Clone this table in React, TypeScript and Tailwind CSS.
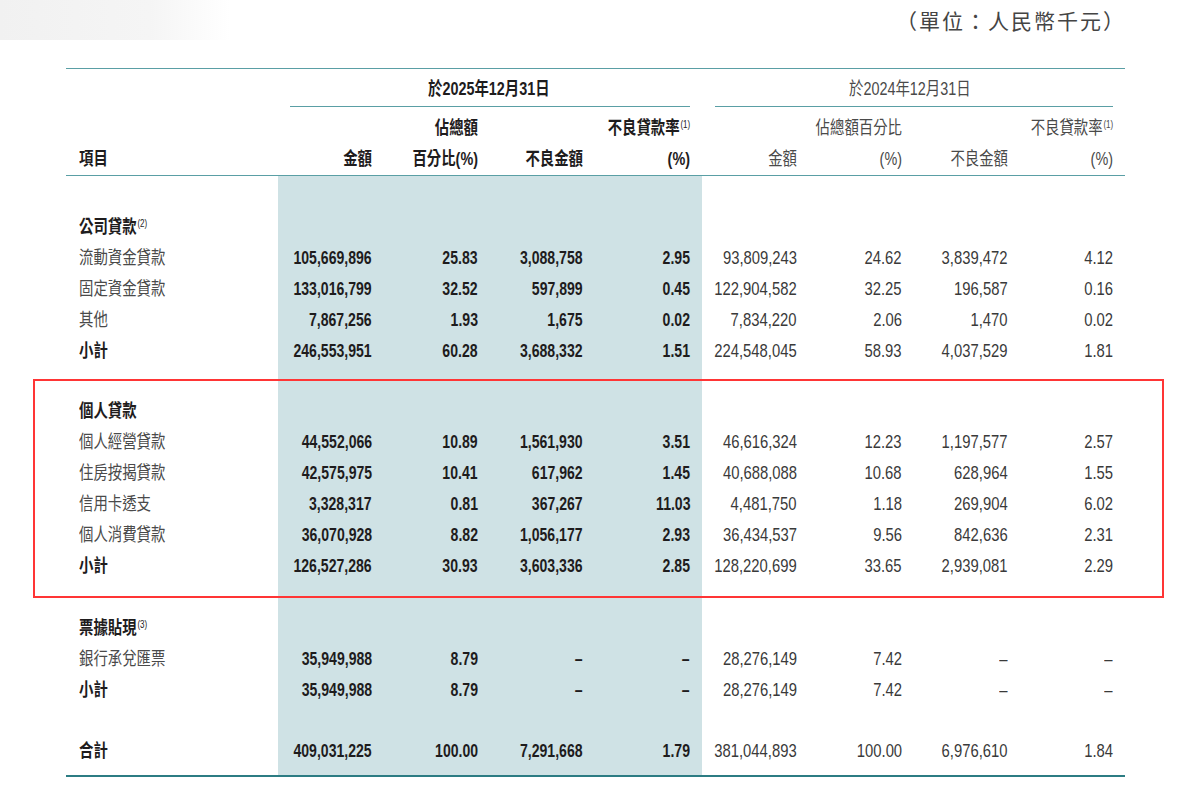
import React from "react";

type Row =
  | { kind: "gap"; h: string }
  | { kind: "head"; label: string; sup?: string }
  | { kind: "data"; label: string; bold?: boolean; v: string[] };

const rows: Row[] = [
  { kind: "gap", h: "h-[35px]" },
  { kind: "head", label: "公司貸款", sup: "(2)" },
  { kind: "data", label: "流動資金貸款", v: ["105,669,896", "25.83", "3,088,758", "2.95", "93,809,243", "24.62", "3,839,472", "4.12"] },
  { kind: "data", label: "固定資金貸款", v: ["133,016,799", "32.52", "597,899", "0.45", "122,904,582", "32.25", "196,587", "0.16"] },
  { kind: "data", label: "其他", v: ["7,867,256", "1.93", "1,675", "0.02", "7,834,220", "2.06", "1,470", "0.02"] },
  { kind: "data", label: "小計", bold: true, v: ["246,553,951", "60.28", "3,688,332", "1.51", "224,548,045", "58.93", "4,037,529", "1.81"] },
  { kind: "gap", h: "h-[29px]" },
  { kind: "head", label: "個人貸款" },
  { kind: "data", label: "個人經營貸款", v: ["44,552,066", "10.89", "1,561,930", "3.51", "46,616,324", "12.23", "1,197,577", "2.57"] },
  { kind: "data", label: "住房按揭貸款", v: ["42,575,975", "10.41", "617,962", "1.45", "40,688,088", "10.68", "628,964", "1.55"] },
  { kind: "data", label: "信用卡透支", v: ["3,328,317", "0.81", "367,267", "11.03", "4,481,750", "1.18", "269,904", "6.02"] },
  { kind: "data", label: "個人消費貸款", v: ["36,070,928", "8.82", "1,056,177", "2.93", "36,434,537", "9.56", "842,636", "2.31"] },
  { kind: "data", label: "小計", bold: true, v: ["126,527,286", "30.93", "3,603,336", "2.85", "128,220,699", "33.65", "2,939,081", "2.29"] },
  { kind: "gap", h: "h-[31px]" },
  { kind: "head", label: "票據貼現", sup: "(3)" },
  { kind: "data", label: "銀行承兌匯票", v: ["35,949,988", "8.79", "–", "–", "28,276,149", "7.42", "–", "–"] },
  { kind: "data", label: "小計", bold: true, v: ["35,949,988", "8.79", "–", "–", "28,276,149", "7.42", "–", "–"] },
  { kind: "gap", h: "h-[30px]" },
  { kind: "data", label: "合計", bold: true, v: ["409,031,225", "100.00", "7,291,668", "1.79", "381,044,893", "100.00", "6,976,610", "1.84"] },
  { kind: "gap", h: "h-[9px]" },
];

const GRID = "grid grid-cols-[212px_106px_106px_105px_107px_107px_105px_106px_105px]";
const SHADE = "bg-[#cfe2e5]";

// condensed CJK text, the source page is squeezed sideways
function Cjk({ children, right, bold }: { children: React.ReactNode; right?: boolean; bold?: boolean }) {
  return (
    <span
      className={`inline-block whitespace-nowrap text-[18px] leading-none scale-x-[0.8] ${right ? "origin-right" : "origin-left"} ${
        bold ? "font-bold text-[#1e1c1d]" : "text-[#4a4a4a]"
      }`}
    >
      {children}
    </span>
  );
}

function Sup({ children }: { children: React.ReactNode }) {
  return <span className="relative -top-[6px] ml-[1px] text-[10px] font-normal">{children}</span>;
}

function Num({ children, bold }: { children: React.ReactNode; bold?: boolean }) {
  return bold ? (
    <span className="inline-block whitespace-nowrap text-[19px] leading-none font-bold text-[#1e1c1d] scale-x-[0.74] origin-right">{children}</span>
  ) : (
    <span className="inline-block whitespace-nowrap text-[19px] leading-none text-[#3a3a3a] scale-x-[0.78] origin-right">{children}</span>
  );
}

function Body() {
  return (
    <div className={GRID}>
      {rows.map((r, i) => {
        if (r.kind === "gap") {
          return (
            <React.Fragment key={i}>
              <div className={r.h} />
              {[0, 1, 2, 3].map((c) => (
                <div key={c} className={`${r.h} ${SHADE}`} />
              ))}
              {[4, 5, 6, 7].map((c) => (
                <div key={c} className={r.h} />
              ))}
            </React.Fragment>
          );
        }
        if (r.kind === "head") {
          return (
            <React.Fragment key={i}>
              <div className="h-[31px] flex items-center pl-[13px]">
                <Cjk bold>
                  {r.label}
                  {r.sup && <Sup>{r.sup}</Sup>}
                </Cjk>
              </div>
              {[0, 1, 2, 3].map((c) => (
                <div key={c} className={`h-[31px] ${SHADE}`} />
              ))}
              {[4, 5, 6, 7].map((c) => (
                <div key={c} className="h-[31px]" />
              ))}
            </React.Fragment>
          );
        }
        return (
          <React.Fragment key={i}>
            <div className="h-[31px] flex items-center pl-[13px]">
              <Cjk bold={r.bold}>{r.label}</Cjk>
            </div>
            {r.v.map((v, c) => (
              <div key={c} className={`h-[31px] flex items-center justify-end pr-[12px] ${c < 4 ? SHADE : ""}`}>
                <Num bold={c < 4}>{v}</Num>
              </div>
            ))}
          </React.Fragment>
        );
      })}
    </div>
  );
}

function Header() {
  return (
    <div>
      <div className="border-t-[1.5px] border-[#5a9fa5]" />
      <div className={GRID}>
        <div />
        <div className="col-span-4 flex flex-col">
          <div className="h-[37px] pt-[3px] flex items-center justify-center pl-[28px]">
            <Cjk bold>於2025年12月31日</Cjk>
          </div>
          <div className="ml-[12px] mr-[12px] border-t border-[#5a9fa5]" />
        </div>
        <div className="col-span-4 flex flex-col">
          <div className="h-[37px] pt-[3px] flex items-center justify-center pl-[24px]">
            <Cjk>於2024年12月31日</Cjk>
          </div>
          <div className="ml-[13px] mr-[12px] border-t border-[#5a9fa5]" />
        </div>
      </div>
      <div className={GRID}>
        {/* first header line */}
        <div className="h-[36px]" />
        <div className="h-[36px]" />
        <div className="h-[36px] pt-[6px] flex items-center justify-end pr-[12px]">
          <Cjk right bold>佔總額</Cjk>
        </div>
        <div className="h-[36px]" />
        <div className="h-[36px] pt-[6px] flex items-center justify-end pr-[12px]">
          <Cjk right bold>
            不良貸款率<Sup>(1)</Sup>
          </Cjk>
        </div>
        <div className="h-[36px]" />
        <div className="h-[36px] pt-[6px] flex items-center justify-end pr-[12px]">
          <Cjk right>佔總額百分比</Cjk>
        </div>
        <div className="h-[36px]" />
        <div className="h-[36px] pt-[6px] flex items-center justify-end pr-[12px]">
          <Cjk right>
            不良貸款率<Sup>(1)</Sup>
          </Cjk>
        </div>
        {/* second header line */}
        <div className="h-[32px] flex items-center pl-[13px]">
          <Cjk bold>項目</Cjk>
        </div>
        {[
          ["金額", true],
          ["百分比(%)", true],
          ["不良金額", true],
          ["(%)", true],
          ["金額", false],
          ["(%)", false],
          ["不良金額", false],
          ["(%)", false],
        ].map(([t, b], c) => (
          <div key={c} className="h-[32px] flex items-center justify-end pr-[12px]">
            <Cjk right bold={b as boolean}>
              {t as string}
            </Cjk>
          </div>
        ))}
      </div>
      <div className="border-t border-[#5a9fa5]" />
    </div>
  );
}

export default function App() {
  return (
    <div
      className="relative w-[1200px] h-[785px] overflow-hidden bg-white bg-[linear-gradient(90deg,#f1f1f1_0px,#f5f5f5_150px,#ffffff_230px)] bg-no-repeat bg-[length:240px_40px]"
      style={{ fontFamily: '"Liberation Sans", Arial, "Noto Sans CJK TC", sans-serif' }}
    >
      <div className="ml-[66px] w-[1059px]">
        <div className="h-[40px] pt-[2px] flex items-center justify-end">
          <span className="text-[21px] tracking-[2px] mr-[-1px] text-[#444]" style={{ fontFamily: '"Noto Sans CJK TC", sans-serif' }}>
            （單位：人民幣千元）
          </span>
        </div>
        <div className="h-[28px]" />
        <Header />
        <Body />
        <div className="border-t-2 border-[#2c7c83]" />
      </div>
      {/* highlight box over the personal loans block */}
      <div className="absolute left-[33px] top-[379px] w-[1131px] h-[219px] border-[2.5px] border-[#ff3535] pointer-events-none" />
    </div>
  );
}
